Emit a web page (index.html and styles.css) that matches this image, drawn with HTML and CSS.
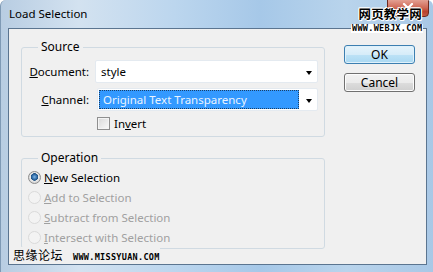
FILE: index.html
```html
<!DOCTYPE html>
<html lang="en">
<head>
    <meta charset="UTF-8">
    <title>Load Selection</title>
    <link rel="stylesheet" href="styles.css">
</head>
<body>
    <div class="window">
        <div class="titlebar">
            <span class="title">Load Selection</span>
            <span class="close">
                <svg width="12" height="10" viewBox="0 0 12 10">
                    <path d="M2 1 L10 9 M10 1 L2 9" stroke="#fff" stroke-width="2.2" stroke-linecap="round"/>
                </svg>
            </span>
        </div>
        <div class="client">
            <div class="groups">
                <fieldset class="group source">
                    <legend>Source</legend>
                    <div class="row">
                        <label class="lbl"><u>D</u>ocument:</label>
                        <div class="select doc">
                            <span class="value">style</span>
                            <span class="arrow"></span>
                        </div>
                    </div>
                    <div class="row">
                        <label class="lbl"><u>C</u>hannel:</label>
                        <div class="select chan">
                            <span class="value selected">Original Text Transparency</span>
                            <span class="arrow"></span>
                        </div>
                    </div>
                    <div class="check-row">
                        <span class="checkbox"></span>
                        <span>In<u>v</u>ert</span>
                    </div>
                </fieldset>
                <fieldset class="group operation">
                    <legend>Operation</legend>
                    <div class="radio-row">
                        <span class="radio checked"></span>
                        <span><u>N</u>ew Selection</span>
                    </div>
                    <div class="radio-row disabled">
                        <span class="radio"></span>
                        <span><u>A</u>dd to Selection</span>
                    </div>
                    <div class="radio-row disabled">
                        <span class="radio"></span>
                        <span><u>S</u>ubtract from Selection</span>
                    </div>
                    <div class="radio-row disabled">
                        <span class="radio"></span>
                        <span><u>I</u>ntersect with Selection</span>
                    </div>
                </fieldset>
            </div>
            <div class="buttons">
                <button class="btn default">OK</button>
                <button class="btn">Cancel</button>
            </div>
        </div>

        <!-- watermarks -->
        <div class="mark-top">
            <div class="mark-cn">网页教学网</div>
            <div class="mark-url">WWW.WEBJX.COM</div>
        </div>
        <div class="mark-bottom">
            <span class="mark-cn2">思缘论坛</span>
            <span class="mark-url2">WWW.MISSYUAN.COM</span>
        </div>
    </div>
</body>
</html>
```

FILE: styles.css
```css
body {
    margin: 0;
    font-family: "Noto Sans", sans-serif;
    font-size: 11.5px;
    color: #000;
}
.window {
    position: relative;
    width: 433px;
    height: 272px;
    box-sizing: border-box;
    padding: 0 6px 7px 7px;
    display: flex;
    flex-direction: column;
    background: linear-gradient(to right, #b8cde2 0%, #d3e2f0 18%, #bcd6ee 40%, #a6c8e8 60%, #b9d4ec 80%, #a9c8e6 100%);
    border-left: 1px solid #7f9ab5;
    border-radius: 6px 6px 0 0;
    overflow: hidden;
}
.titlebar {
    height: 28px;
    position: relative;
    flex-shrink: 0;
}
.title {
    position: absolute;
    left: 1px;
    top: 6px;
    font-size: 11.5px;
    line-height: 16px;
}
.close {
    position: absolute;
    right: -2px;
    top: -2px;
    width: 42px;
    height: 19px;
    box-sizing: border-box;
    border-radius: 0 0 4px 4px;
    background: linear-gradient(#e6a699, #cf6a58 50%, #b8412e 75%, #c45a46);
    border: 1px solid #6d2a20;
    display: flex;
    justify-content: center;
    padding-top: 4px;
}
.client {
    flex: 1;
    display: flex;
    background: #f0f0f0;
    border: 1px solid #5b7590;
}
.groups {
    width: 304px;
    margin-left: 12px;
    padding-top: 10px;
}
.group {
    margin: 0;
    padding: 0 6px 0 6px;
    border: 1px solid #d0dae2;
    border-radius: 3px;
    min-width: 0;
}
.group legend {
    padding: 0 3px;
    margin-left: 10px;
    line-height: 16px;
    font-size: 12px;
}
.source {
    padding-bottom: 5px;
}
.operation {
    margin-top: 13px;
    padding-bottom: 1px;
}
.row {
    display: flex;
    align-items: center;
    margin-top: 5px;
}
.lbl {
    width: 61px;
    text-align: right;
    flex-shrink: 0;
}
.select {
    height: 23px;
    box-sizing: border-box;
    background: #fff;
    border: 1px solid #e4eaf0;
    border-radius: 2px;
    display: flex;
    align-items: center;
    position: relative;
}
.doc {
    margin-left: 6px;
    width: 223px;
}
.chan {
    margin-left: 8px;
    width: 221px;
}
.value {
    padding-left: 5px;
    line-height: 17px;
}
.selected {
    margin-left: 1px;
    width: 200px;
    height: 19px;
    box-sizing: border-box;
    padding-left: 3px;
    background: #3399ff;
    color: #eaf4ff;
    border: 1px dotted #1a3f66;
}
.arrow {
    position: absolute;
    right: 5px;
    top: 10px;
    width: 0;
    height: 0;
    border-left: 3.5px solid transparent;
    border-right: 3.5px solid transparent;
    border-top: 4px solid #000;
}
.check-row {
    display: flex;
    align-items: center;
    gap: 4px;
    margin: 4px 0 0 69px;
    height: 16px;
}
.checkbox {
    width: 13px;
    height: 13px;
    box-sizing: border-box;
    border: 1px solid #8f8f8f;
    background: linear-gradient(135deg, #d8d8d8, #fafafa);
    box-shadow: inset 0 0 0 1px #f4f4f4;
}
.radio-row {
    display: flex;
    align-items: center;
    gap: 3px;
    height: 20px;
}
.radio-row:first-of-type {
    margin-top: 1px;
}
.radio {
    width: 13px;
    height: 13px;
    box-sizing: border-box;
    border-radius: 50%;
    border: 1px solid #dadada;
    background: #f3f3f3;
}
.radio.checked {
    border-color: #8c8c8c;
    background: radial-gradient(circle at 50% 45%, #7fb6e6 0, #2f6aa5 2.5px, #1e4f80 3.5px, #eaeaea 4px, #d6d6d6 6px);
}
.disabled {
    color: #a0a0a0;
}
.buttons {
    margin-left: 19px;
    padding-top: 16px;
    display: flex;
    flex-direction: column;
    gap: 9px;
}
.btn {
    width: 71px;
    height: 19px;
    padding: 0;
    font-family: "Noto Sans", sans-serif;
    font-size: 12px;
    color: #000;
    border: 1px solid #707070;
    border-radius: 3px;
    background: linear-gradient(#f2f2f2 0%, #ebebeb 50%, #dddddd 51%, #cfcfcf 100%);
    box-shadow: inset 0 0 0 1px #fcfcfc;
}
.btn.default {
    border-color: #3c7fb1;
    background: linear-gradient(#e6f4fb 0%, #d6ecf9 50%, #bde2f6 51%, #a9d8f2 100%);
    box-shadow: inset 0 0 0 1px #dff1fb;
}
.mark-top {
    position: absolute;
    left: 350px;
    top: 6px;
    text-align: center;
}
.mark-cn {
    font-family: "Noto Sans CJK SC", sans-serif;
    font-size: 12.5px;
    font-weight: bold;
    letter-spacing: 0.2px;
    line-height: 16px;
    color: #000;
    text-shadow: 1px 0 #fff, -1px 0 #fff, 0 1px #fff, 0 -1px #fff, 1px 1px #fff, -1px -1px #fff;
    padding-left: 6px;
}
.mark-url {
    margin-top: 2px;
    font-family: "DejaVu Sans Mono", monospace;
    font-weight: bold;
    font-size: 8.5px;
    line-height: 9px;
    letter-spacing: 0.3px;
    background: #fff;
    padding: 0 1px;
}
.mark-bottom {
    position: absolute;
    left: 12px;
    top: 247px;
    display: flex;
    align-items: center;
    gap: 10px;
    background: #f0f0f0;
}
.mark-cn2 {
    font-family: "Noto Sans CJK SC", sans-serif;
    font-size: 12px;
    letter-spacing: 0.5px;
    line-height: 16px;
}
.mark-url2 {
    font-family: "DejaVu Sans Mono", monospace;
    font-weight: bold;
    font-size: 8.5px;
    letter-spacing: 0.3px;
    padding-top: 3px;
}
```
